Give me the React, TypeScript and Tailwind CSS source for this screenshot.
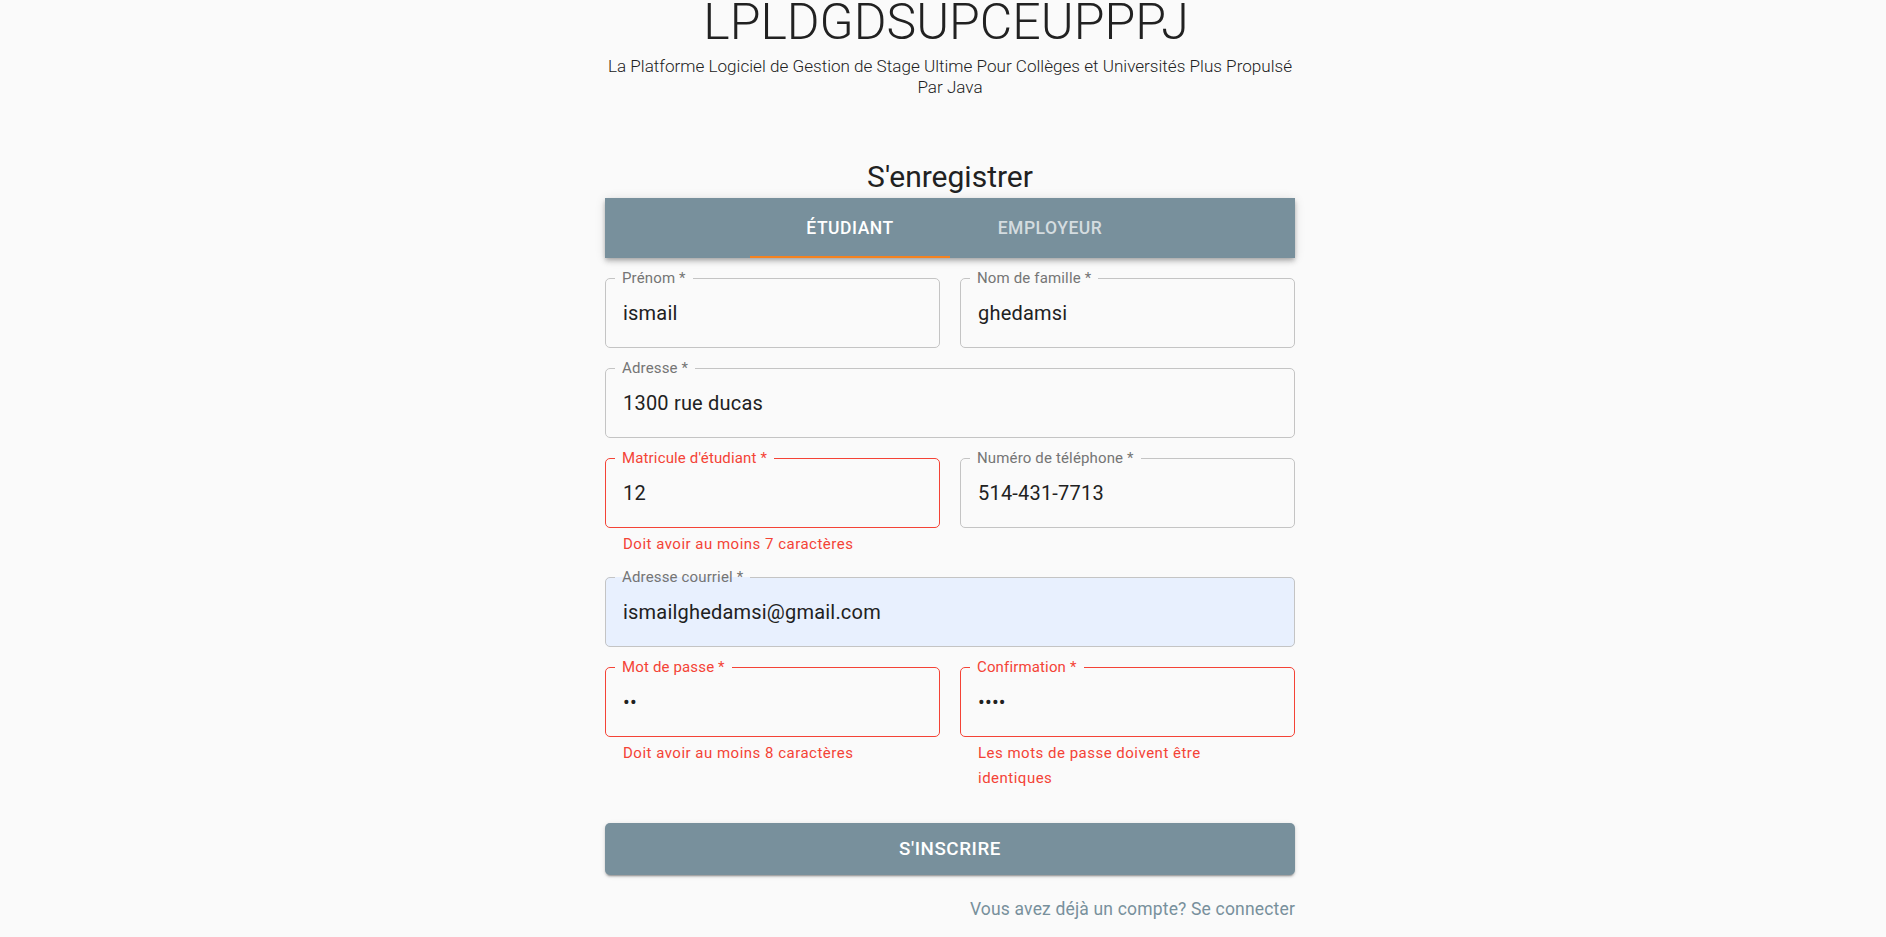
import type { ReactNode } from 'react';

type FieldProps = {
  label: string;
  value: string;
  type?: string;
  error?: boolean;
  autofill?: boolean;
  helper?: ReactNode;
  wide?: boolean;
};

function Field({ label, value, type = 'text', error, autofill, helper, wide }: FieldProps) {
  return (
    <div className={wide ? 'col-span-2' : ''}>
      <div className="relative h-[70px]">
        <fieldset
          className={`pointer-events-none absolute inset-x-0 -top-[9px] bottom-0 m-0 min-w-0 rounded-[5px] border px-[9px] ${
            error ? 'border-[#f44336]' : 'border-[#c4c4c4]'
          } ${autofill ? 'bg-[#e8f0fe]' : ''}`}
        >
          <legend
            className={`px-[7px] text-[15px] leading-[18px] tracking-[0.01em] ${
              error ? 'text-[#f44336]' : 'text-[#757575]'
            }`}
          >
            {label}
          </legend>
        </fieldset>
        <input
          readOnly
          type={type}
          defaultValue={value}
          className="relative h-full w-full bg-transparent px-[18px] text-[20px] tracking-[0.01em] text-[#212121] outline-none"
        />
      </div>
      {helper && (
        <p className="mt-[4px] px-[18px] text-[15px] leading-[25px] tracking-[0.033em] text-[#f44336]">
          {helper}
        </p>
      )}
    </div>
  );
}

export default function App() {
  return (
    <div className="min-h-screen bg-[#fafafa] font-['Roboto',sans-serif] text-[#212121]">
      <div className="flex justify-center pl-[14px]">
        <main className="w-[690px]">
          <h1 className="pr-[8px] text-center text-[50px] leading-[44px] font-light">LPLDGDSUPCEUPPPJ</h1>
          <p className="mt-[12px] text-center text-[17.1px] leading-[21px] font-light whitespace-nowrap">
            La Platforme Logiciel de Gestion de Stage Ultime Pour Collèges et Universités Plus Propulsé
            <br />
            Par Java
          </p>

          <h2 className="mt-[61px] text-center text-[30px] leading-[36px]">S'enregistrer</h2>

          <div className="mt-[3px] flex h-[60px] justify-center bg-[#78909c] shadow-[0_2px_4px_-1px_rgba(0,0,0,0.2),0_4px_5px_0_rgba(0,0,0,0.14),0_1px_10px_0_rgba(0,0,0,0.12)]">
            <button className="relative w-[200px] text-[17.5px] font-medium tracking-[0.03em] text-white uppercase">
              Étudiant
              <span className="absolute inset-x-0 bottom-0 h-[2px] bg-[#f5821f]" />
            </button>
            <button className="w-[200px] text-[17.5px] font-medium tracking-[0.03em] text-white/70 uppercase">
              Employeur
            </button>
          </div>

          <form className="mt-[20px] grid grid-cols-2 gap-x-[20px] gap-y-[20px]">
            <Field label="Prénom *" value="ismail" />
            <Field label="Nom de famille *" value="ghedamsi" />
            <Field label="Adresse *" value="1300 rue ducas" wide />
            <Field label="Matricule d'étudiant *" value="12" error helper="Doit avoir au moins 7 caractères" />
            <Field label="Numéro de téléphone *" value="514-431-7713" />
            <Field label="Adresse courriel *" value="ismailghedamsi@gmail.com" autofill wide />
            <Field label="Mot de passe *" value="12" type="password" error helper="Doit avoir au moins 8 caractères" />
            <Field
              label="Confirmation *"
              value="1234"
              type="password"
              error
              helper={
                <>
                  Les mots de passe doivent être
                  <br />
                  identiques
                </>
              }
            />
          </form>

          <button className="mt-[32px] h-[52px] w-full rounded-[5px] bg-[#78909c] text-[18.75px] font-medium tracking-[0.03em] text-white uppercase shadow-[0_3px_1px_-2px_rgba(0,0,0,0.2),0_2px_2px_0_rgba(0,0,0,0.14),0_1px_5px_0_rgba(0,0,0,0.12)]">
            S'inscrire
          </button>

          <div className="mt-[22px] flex justify-end">
            <a className="text-[17.5px] leading-[25px] tracking-[0.01em] text-[#78909c]">
              Vous avez déjà un compte? Se connecter
            </a>
          </div>
        </main>
      </div>
    </div>
  );
}
